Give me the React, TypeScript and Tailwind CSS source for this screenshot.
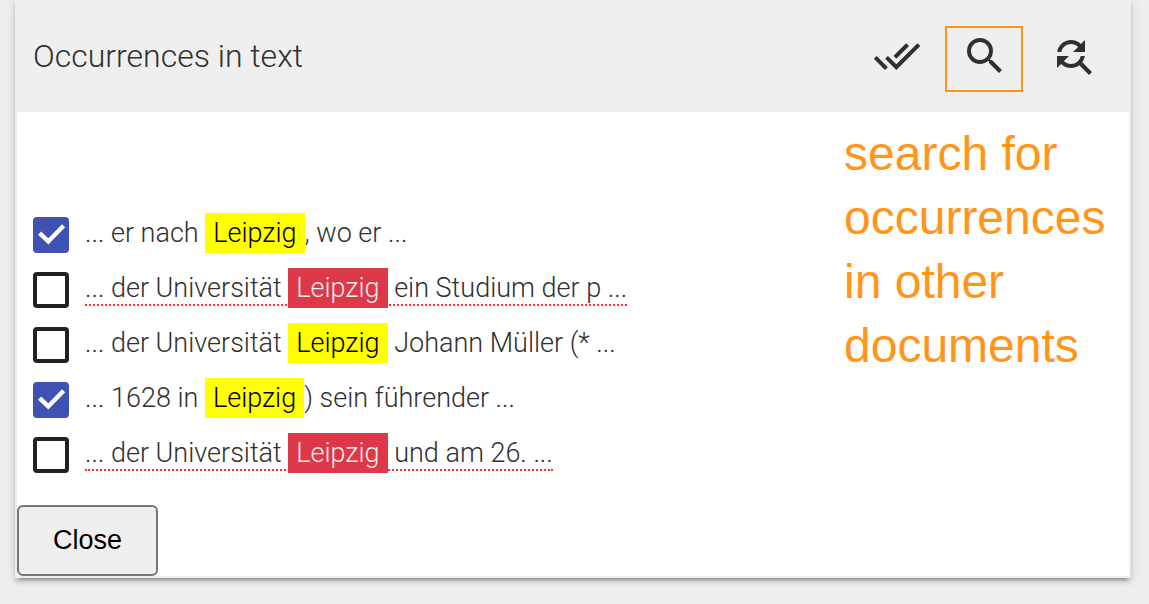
import { useState } from "react";
import { MdDoneAll, MdSearch, MdFindReplace } from "react-icons/md";

type Occurrence = {
  before: string;
  after: string;
  checked: boolean;
  rejected: boolean;
};

const TERM = "Leipzig";

const INITIAL: Occurrence[] = [
  { before: "... er nach ", after: ", wo er ...", checked: true, rejected: false },
  { before: "... der Universität ", after: " ein Studium der p ...", checked: false, rejected: true },
  { before: "... der Universität ", after: " Johann Müller (* ...", checked: false, rejected: false },
  { before: "... 1628 in ", after: ") sein führender ...", checked: true, rejected: false },
  { before: "... der Universität ", after: " und am 26. ...", checked: false, rejected: true },
];

function OccurrenceRow({
  item,
  onToggle,
}: {
  item: Occurrence;
  onToggle: () => void;
}) {
  return (
    <li>
      <label className="flex h-[55px] cursor-pointer items-center gap-4">
        <span className="grid size-9 shrink-0">
          <input
            type="checkbox"
            checked={item.checked}
            onChange={onToggle}
            className="col-start-1 row-start-1 size-9 appearance-none rounded border-4 border-[#212121] checked:border-[#3f51b5] checked:bg-[#3f51b5]"
          />
          {item.checked && (
            <svg
              viewBox="0 0 24 24"
              className="pointer-events-none col-start-1 row-start-1 size-9"
              fill="none"
              stroke="#fff"
              strokeWidth="3"
              aria-hidden="true"
            >
              <path d="M4.4 10.8 10.2 16.3 20.4 5.8" />
            </svg>
          )}
        </span>
        <span className="pb-1 text-[27px] leading-8 whitespace-pre">
          <span
            className={
              item.rejected ? "border-b-2 border-dotted border-[#ff2d37]" : ""
            }
          >
            {item.before}
            <mark
              className={
                item.rejected
                  ? "bg-[#dc3848] px-2 py-1 text-[#eeeeee]"
                  : "bg-[#ffff00] px-2 py-1 text-black"
              }
            >
              {TERM}
            </mark>
            {item.after}
          </span>
        </span>
      </label>
    </li>
  );
}

export default function App() {
  const [items, setItems] = useState(INITIAL);

  const toggle = (index: number) =>
    setItems((list) =>
      list.map((o, i) => (i === index ? { ...o, checked: !o.checked } : o)),
    );

  return (
    <div className="min-h-screen bg-[#eeeeee] pr-[18px] pb-6 pl-[15px] font-['Roboto',sans-serif] font-light text-[#303030]">
      <section className="border-2 border-t-0 border-[#eeeeee] bg-white shadow-[0_6px_2px_-4px_rgba(0,0,0,0.2),0_4px_4px_0_rgba(0,0,0,0.14),0_2px_10px_0_rgba(0,0,0,0.12)]">
        <header className="flex h-28 items-center justify-between bg-[#efefef] pr-8 pl-4">
          <h1 className="text-[32px] leading-10">Occurrences in text</h1>
          <div className="flex gap-10">
            <button
              type="button"
              aria-label="Select all"
              onClick={() => setItems((l) => l.map((o) => ({ ...o, checked: true })))}
            >
              <MdDoneAll className="size-12" />
            </button>
            <button type="button" aria-label="Search" className="relative">
              <MdSearch className="size-12" />
              <span className="absolute -top-[6px] -left-4 h-[66px] w-[78px] border-2 border-[#ff9519]" />
            </button>
            <button type="button" aria-label="Find and replace">
              <MdFindReplace className="size-12" />
            </button>
          </div>
        </header>

        <div className="flex justify-between pl-4">
          <ul className="pt-[95px] pb-[23px]">
            {items.map((item, i) => (
              <OccurrenceRow key={i} item={item} onToggle={() => toggle(i)} />
            ))}
          </ul>
          <p className="w-[285px] pt-[10px] font-['Liberation_Sans',sans-serif] text-[48px] leading-16 font-normal text-[#ff9519]">
            search for occurrences in other documents
          </p>
        </div>

        <button
          type="button"
          className="block rounded-md border-2 border-[#767676] bg-[#efefef] px-[34px] pt-[15px] pb-4 font-['Liberation_Sans',sans-serif] text-[27px] leading-9 font-normal text-black"
        >
          Close
        </button>
      </section>
    </div>
  );
}
